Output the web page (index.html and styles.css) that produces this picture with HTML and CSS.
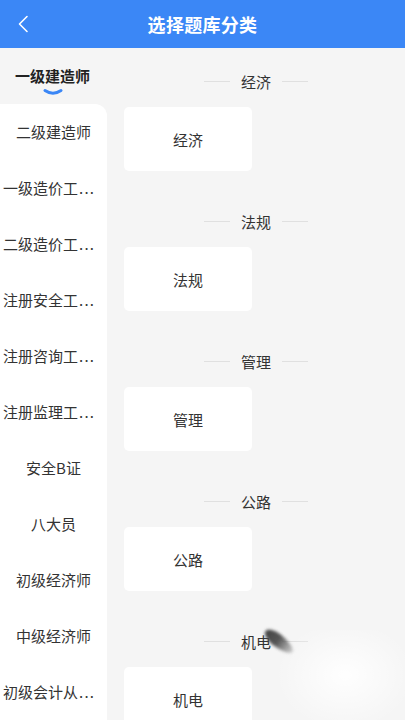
FILE: index.html
```html
<!DOCTYPE html>
<html lang="zh">
<head>
<meta charset="utf-8">
<title>选择题库分类</title>
<link rel="stylesheet" href="styles.css">
</head>
<body>
<header class="topbar">
  <span class="back">
    <svg width="12" height="18" viewBox="0 0 12 18"><path d="M10 1.5 L2.5 9 L10 16.5" fill="none" stroke="#fff" stroke-width="1.6" stroke-linecap="round" stroke-linejoin="round"/></svg>
  </span>
  <h1 class="title">选择题库分类</h1>
</header>
<div class="main">
  <aside class="side">
    <div class="side-active">
      <div class="side-active-text">一级建造师</div>
      <svg class="indicator" width="20" height="8" viewBox="0 0 20 8"><path d="M2 2.5 Q10 8 18 2.5" fill="none" stroke="#3b87f6" stroke-width="3" stroke-linecap="round"/></svg>
    </div>
    <div class="side-list">
      <div class="side-item">二级建造师</div>
      <div class="side-item side-item-clip">一级造价工<span class="dots">...</span></div>
      <div class="side-item side-item-clip">二级造价工<span class="dots">...</span></div>
      <div class="side-item side-item-clip">注册安全工<span class="dots">...</span></div>
      <div class="side-item side-item-clip">注册咨询工<span class="dots">...</span></div>
      <div class="side-item side-item-clip">注册监理工<span class="dots">...</span></div>
      <div class="side-item">安全B证</div>
      <div class="side-item">八大员</div>
      <div class="side-item">初级经济师</div>
      <div class="side-item">中级经济师</div>
      <div class="side-item side-item-clip">初级会计从<span class="dots">...</span></div>
    </div>
  </aside>
  <section class="content">
    <div class="group">
      <div class="group-title"><span class="line"></span><span>经济</span><span class="line"></span></div>
      <div class="cards"><div class="card">经济</div></div>
    </div>
    <div class="group">
      <div class="group-title"><span class="line"></span><span>法规</span><span class="line"></span></div>
      <div class="cards"><div class="card">法规</div></div>
    </div>
    <div class="group">
      <div class="group-title"><span class="line"></span><span>管理</span><span class="line"></span></div>
      <div class="cards"><div class="card">管理</div></div>
    </div>
    <div class="group">
      <div class="group-title"><span class="line"></span><span>公路</span><span class="line"></span></div>
      <div class="cards"><div class="card">公路</div></div>
    </div>
    <div class="group">
      <div class="group-title"><span class="line"></span><span>机电</span><span class="line"></span></div>
      <div class="cards"><div class="card">机电</div></div>
    </div>
    <div class="glare"></div>
    <div class="smudge"></div>
  </section>
</div>
</body>
</html>
```

FILE: styles.css
```css
* { box-sizing: border-box; }
html, body { margin: 0; padding: 0; }
body {
  width: 405px;
  height: 720px;
  overflow: hidden;
  background: #f5f5f5;
  font-family: "Noto Sans CJK SC", "Noto Sans", sans-serif;
  color: #333;
}
.topbar {
  height: 48px;
  background: #3b87f6;
  display: flex;
  align-items: center;
  justify-content: center;
  position: relative;
}
.back {
  position: absolute;
  left: 17px;
  top: 15px;
  display: flex;
}
.title {
  margin: 0;
  font-size: 18px;
  font-weight: bold;
  color: #fff;
  letter-spacing: 0.3px;
}
.main {
  display: flex;
  height: 672px;
}
.side {
  width: 107px;
  flex: none;
  display: flex;
  flex-direction: column;
}
.side-active {
  height: 56px;
  display: flex;
  flex-direction: column;
  align-items: center;
  padding-top: 17px;
  padding-right: 2px;
}
.side-active-text {
  font-size: 15px;
  line-height: 22px;
  font-weight: bold;
  color: #222;
}
.indicator { margin-top: 1px; }
.side-list {
  flex: 1;
  background: #fff;
  border-top-right-radius: 12px;
}
.side-item {
  height: 56px;
  line-height: 56px;
  padding: 0 2px;
  font-size: 15px;
  text-align: center;
  white-space: nowrap;
  overflow: hidden;
  color: #333;
}
.side-item-clip {
  text-align: left;
  padding-left: 3px;
}
.dots {
  letter-spacing: 1.2px;
  margin-left: 1px;
}
.content {
  flex: 1;
  padding-top: 7px;
  position: relative;
}
.group { margin-bottom: 24px; }
.group-title {
  height: 52px;
  display: flex;
  align-items: center;
  justify-content: center;
  gap: 11px;
  font-size: 15px;
  color: #333;
}
.line {
  width: 26px;
  height: 1px;
  background: #e0e0e0;
}
.cards {
  display: flex;
  padding-left: 17px;
}
.card {
  width: 128px;
  height: 64px;
  background: #fff;
  border-radius: 5px;
  display: flex;
  align-items: center;
  justify-content: center;
  font-size: 15px;
  color: #333;
}
.smudge {
  position: absolute;
  left: 155px;
  top: 587px;
  width: 34px;
  height: 13px;
  background: linear-gradient(90deg, #444 0%, #555 45%, rgba(120,120,120,0.3) 100%);
  border-radius: 40% 60% 60% 40% / 50%;
  transform: rotate(38deg);
  filter: blur(1.6px);
}
.glare {
  position: absolute;
  left: 168px;
  top: 582px;
  width: 140px;
  height: 100px;
  background: radial-gradient(ellipse at 50% 45%, rgba(255,255,255,0.95), rgba(255,255,255,0) 70%);
  pointer-events: none;
}
```
